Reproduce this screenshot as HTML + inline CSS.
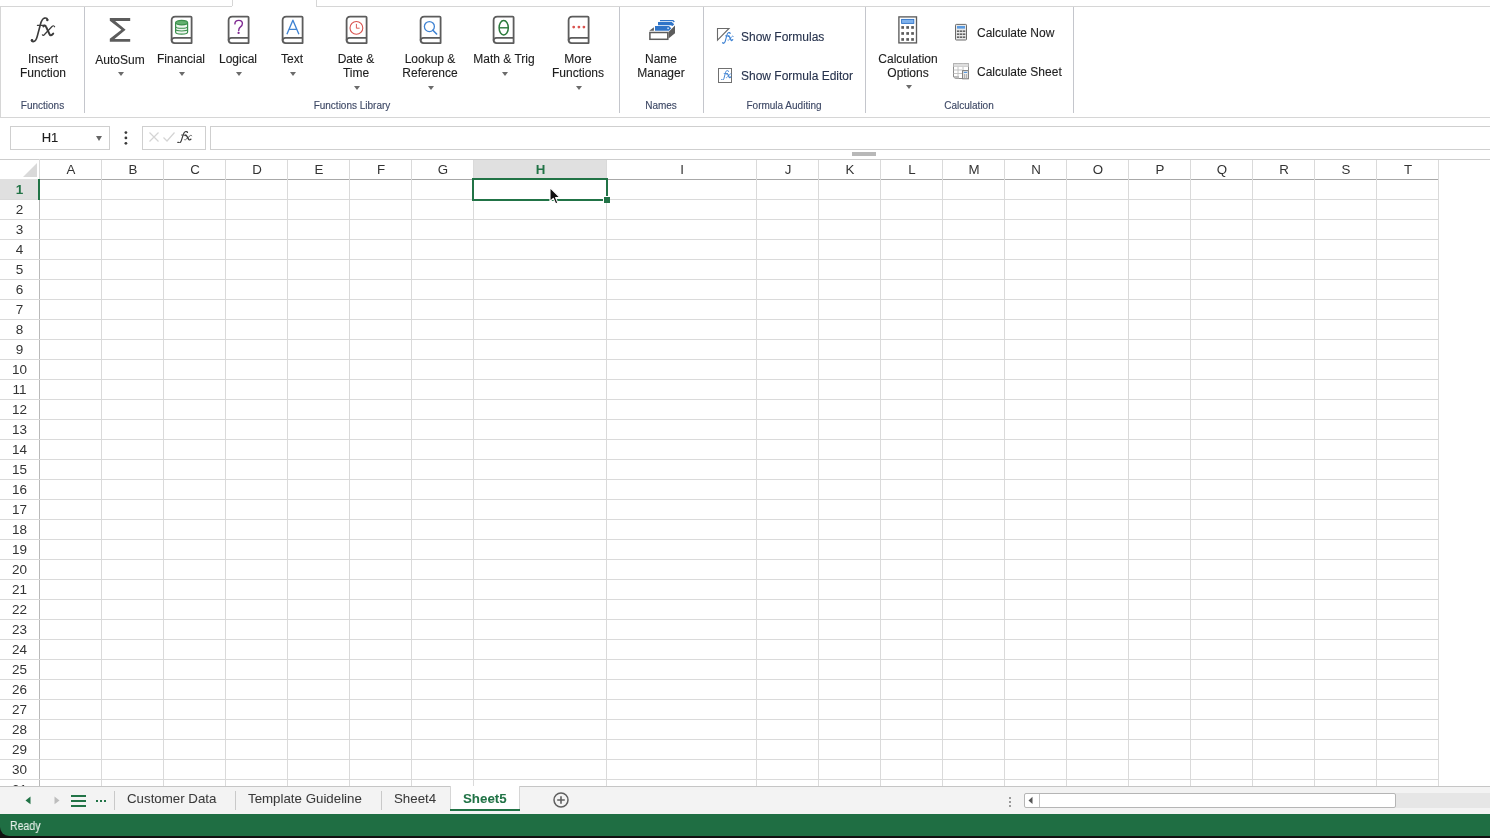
<!DOCTYPE html><html><head><meta charset="utf-8"><style>
*{box-sizing:border-box;margin:0;padding:0}
html,body{width:1490px;height:838px;overflow:hidden;background:#fff}
body{position:relative;font-family:"Liberation Sans",sans-serif;color:#222;-webkit-text-stroke:0.12px currentColor}
.abs{position:absolute}
.lbl,.grp,.ch,.rh,.t{will-change:transform}
.hl{position:absolute;height:1px}
.vl{position:absolute;width:1px}
.lbl{position:absolute;font-size:12px;line-height:14px;color:#1e1e1e;text-align:center;white-space:nowrap}
.grp{position:absolute;font-size:10px;line-height:12px;color:#3c4764;text-align:center;white-space:nowrap;top:100px}
.arr{position:absolute;width:0;height:0;border-left:3px solid transparent;border-right:3px solid transparent;border-top:4px solid #6b6b6b}
.ch{position:absolute;top:160px;height:20px;font-size:13.3px;line-height:20px;text-align:center;color:#333;-webkit-text-stroke:0}
.rh{position:absolute;left:0;width:39px;height:20px;font-size:13.5px;line-height:20px;text-align:center;color:#333;-webkit-text-stroke:0}
</style></head><body>
<div class="hl" style="left:0;top:6px;width:232px;background:#d6d6d6"></div>
<div class="hl" style="left:316px;top:6px;width:1174px;background:#d6d6d6"></div>
<div class="vl" style="left:232px;top:0;height:6px;background:#d6d6d6"></div>
<div class="vl" style="left:316px;top:0;height:6px;background:#d6d6d6"></div>
<div class="vl" style="left:0;top:6px;height:111px;background:#d6d6d6"></div>
<div class="hl" style="left:0;top:117px;width:1490px;background:#d6d6d6"></div>
<div class="vl" style="left:84px;top:7px;height:106px;background:#c4c6cc"></div>
<div class="vl" style="left:619px;top:7px;height:106px;background:#c4c6cc"></div>
<div class="vl" style="left:703px;top:7px;height:106px;background:#c4c6cc"></div>
<div class="vl" style="left:865px;top:7px;height:106px;background:#c4c6cc"></div>
<div class="vl" style="left:1073px;top:7px;height:106px;background:#c4c6cc"></div>
<div class="grp" style="left:0;width:85px">Functions</div>
<div class="grp" style="left:85px;width:534px">Functions Library</div>
<div class="grp" style="left:619px;width:84px">Names</div>
<div class="grp" style="left:703px;width:162px">Formula Auditing</div>
<div class="grp" style="left:865px;width:208px">Calculation</div>
<svg class="abs" style="left:30px;top:17px" width="26.0" height="26.0" viewBox="0 0 26 26" preserveAspectRatio="none"><g fill="none" stroke="#3b3b3b" stroke-linecap="round"><path d="M17.6,2.6 C17.2,1.2 15.8,0.8 14.6,1.1 C12.2,1.8 11.2,4.5 10.4,7.5 L7.2,19.5 C6.4,22.5 5.2,24.6 3.2,24.6 C2,24.6 1.4,23.8 1.6,23" stroke-width="1.6"/><path d="M7.4,8.3 H14.4" stroke-width="1.2"/><path d="M13.4,9.5 C14.2,8.3 15.4,8.2 16,9.6 L19.6,17.4 C20.2,18.8 21.4,18.8 23.2,16.6" stroke-width="2.0"/><path d="M24.6,9.8 C24,8.4 23,8.5 22,9.5 L14.5,17.5 C13.6,18.6 12.8,18.6 12.4,17.8" stroke-width="1.2"/></g><circle cx="17.3" cy="3" r="1.2" fill="#3b3b3b"/><circle cx="2.1" cy="23.2" r="1.2" fill="#3b3b3b"/></svg>
<svg class="abs" style="left:109px;top:18px" width="22" height="24" viewBox="0 0 22 24"><polygon points="0.8,0 21.2,0 21.2,2.9 6.1,2.9 16.6,11.85 5.5,21 21.2,21 21.2,23.7 0.8,23.7 0.8,20.8 12.4,11.85 0.8,2.7" fill="#5c5c5c"/></svg>
<svg class="abs" style="left:170.0px;top:15.3px" width="24" height="30" viewBox="0 0 24 30"><path d="M5.3,1.6 H20.6 Q21.6,1.6 21.6,2.6 V28.1 H4.6 Q1.6,28.1 1.6,25.1 V5.3 Q1.6,1.6 5.3,1.6 Z" fill="none" stroke="#5c5c5c" stroke-width="1.8" stroke-linejoin="round"/><path d="M1.6,25.6 Q1.6,22.9 4.6,22.9 H21.6" fill="none" stroke="#5c5c5c" stroke-width="1.8"/><path d="M5.6,7.7 V17 Q5.6,19.2 11.6,19.2 Q17.6,19.2 17.6,17 V7.7" fill="#eef6ef" stroke="#3a8f4c" stroke-width="1.2"/><ellipse cx="11.6" cy="7.6" rx="6" ry="2.3" fill="#64b070" stroke="#3a8f4c" stroke-width="1.2"/><path d="M5.6,11.4 Q5.6,13.2 11.6,13.2 Q17.6,13.2 17.6,11.4 M5.6,14.3 Q5.6,16 11.6,16 Q17.6,16 17.6,14.3" fill="none" stroke="#3a8f4c" stroke-width="1.1"/></svg>
<svg class="abs" style="left:227.2px;top:15.3px" width="24" height="30" viewBox="0 0 24 30"><path d="M5.3,1.6 H20.6 Q21.6,1.6 21.6,2.6 V28.1 H4.6 Q1.6,28.1 1.6,25.1 V5.3 Q1.6,1.6 5.3,1.6 Z" fill="none" stroke="#5c5c5c" stroke-width="1.8" stroke-linejoin="round"/><path d="M1.6,25.6 Q1.6,22.9 4.6,22.9 H21.6" fill="none" stroke="#5c5c5c" stroke-width="1.8"/><path d="M7.9,8.9 Q8,5.4 11.8,5.4 Q15.4,5.4 15.4,8.6 Q15.4,10.6 13.5,11.9 Q11.7,13.1 11.7,15.5" fill="none" stroke="#7f2a92" stroke-width="1.4" stroke-linecap="round"/><circle cx="11.6" cy="17.9" r="1.15" fill="#7f2a92"/></svg>
<svg class="abs" style="left:281.3px;top:15.3px" width="24" height="30" viewBox="0 0 24 30"><path d="M5.3,1.6 H20.6 Q21.6,1.6 21.6,2.6 V28.1 H4.6 Q1.6,28.1 1.6,25.1 V5.3 Q1.6,1.6 5.3,1.6 Z" fill="none" stroke="#5c5c5c" stroke-width="1.8" stroke-linejoin="round"/><path d="M1.6,25.6 Q1.6,22.9 4.6,22.9 H21.6" fill="none" stroke="#5c5c5c" stroke-width="1.8"/><path d="M5.9,19.3 L11.9,5.2 L17.9,19.3 M8,14.4 H15.8" fill="none" stroke="#3f83d3" stroke-width="1.35" stroke-linejoin="round"/></svg>
<svg class="abs" style="left:345.3px;top:15.3px" width="24" height="30" viewBox="0 0 24 30"><path d="M5.3,1.6 H20.6 Q21.6,1.6 21.6,2.6 V28.1 H4.6 Q1.6,28.1 1.6,25.1 V5.3 Q1.6,1.6 5.3,1.6 Z" fill="none" stroke="#5c5c5c" stroke-width="1.8" stroke-linejoin="round"/><path d="M1.6,25.6 Q1.6,22.9 4.6,22.9 H21.6" fill="none" stroke="#5c5c5c" stroke-width="1.8"/><circle cx="11.4" cy="12.9" r="6.4" fill="none" stroke="#d9534f" stroke-width="1.1"/><path d="M11.4,8.9 V13.2 H14.6" fill="none" stroke="#d9534f" stroke-width="0.95"/></svg>
<svg class="abs" style="left:419.0px;top:15.3px" width="24" height="30" viewBox="0 0 24 30"><path d="M5.3,1.6 H20.6 Q21.6,1.6 21.6,2.6 V28.1 H4.6 Q1.6,28.1 1.6,25.1 V5.3 Q1.6,1.6 5.3,1.6 Z" fill="none" stroke="#5c5c5c" stroke-width="1.8" stroke-linejoin="round"/><path d="M1.6,25.6 Q1.6,22.9 4.6,22.9 H21.6" fill="none" stroke="#5c5c5c" stroke-width="1.8"/><circle cx="10.4" cy="11.6" r="5" fill="none" stroke="#3f83d3" stroke-width="1.3"/><path d="M13.9,15.2 L17.6,19" fill="none" stroke="#3f83d3" stroke-width="1.6" stroke-linecap="round"/></svg>
<svg class="abs" style="left:492.3px;top:15.3px" width="24" height="30" viewBox="0 0 24 30"><path d="M5.3,1.6 H20.6 Q21.6,1.6 21.6,2.6 V28.1 H4.6 Q1.6,28.1 1.6,25.1 V5.3 Q1.6,1.6 5.3,1.6 Z" fill="none" stroke="#5c5c5c" stroke-width="1.8" stroke-linejoin="round"/><path d="M1.6,25.6 Q1.6,22.9 4.6,22.9 H21.6" fill="none" stroke="#5c5c5c" stroke-width="1.8"/><ellipse cx="11.7" cy="12.8" rx="4.6" ry="7.2" fill="none" stroke="#2b7a3b" stroke-width="1.5"/><path d="M7.2,12.8 H16.2" stroke="#2b7a3b" stroke-width="1.4"/></svg>
<svg class="abs" style="left:566.7px;top:15.3px" width="24" height="30" viewBox="0 0 24 30"><path d="M5.3,1.6 H20.6 Q21.6,1.6 21.6,2.6 V28.1 H4.6 Q1.6,28.1 1.6,25.1 V5.3 Q1.6,1.6 5.3,1.6 Z" fill="none" stroke="#5c5c5c" stroke-width="1.8" stroke-linejoin="round"/><path d="M1.6,25.6 Q1.6,22.9 4.6,22.9 H21.6" fill="none" stroke="#5c5c5c" stroke-width="1.8"/><circle cx="6.7" cy="12.1" r="1.4" fill="#d9534f"/><circle cx="11.9" cy="12.1" r="1.4" fill="#d9534f"/><circle cx="16.9" cy="12.1" r="1.4" fill="#d9534f"/></svg>
<svg class="abs" style="left:648px;top:19px" width="28" height="22" viewBox="0 0 28 22"><polygon points="12,0.9 25.2,0.9 26.8,2.5 25.7,3.6 24.9,2.3 12,2.3" fill="#2f74c8"/><polygon points="10,3.1 23.8,3.1 26.2,5.2 24.6,7 22.6,6.3 10,6.3" fill="#2f74c8"/><polygon points="7,7.1 21,7.1 23.3,9.3 21,11.7 7,11.7" fill="#2f74c8"/><rect x="19.3" y="8.5" width="1.6" height="1.6" fill="#cfe0f5"/><polygon points="1.3,11.7 5.9,8.2 5.9,11.7" fill="#5c5c5c"/><polygon points="20.5,13 27,6.6 27,14.3 20.5,19.6" fill="#5c5c5c"/><rect x="1.9" y="13.5" width="17.9" height="6.8" fill="#fff" stroke="#5c5c5c" stroke-width="1.5"/></svg>
<svg class="abs" style="left:716px;top:27px" width="20" height="19" viewBox="0 0 20 19"><path d="M1.5,1.5 H13 L1.5,13.2 Z" fill="none" stroke="#6a6a6a" stroke-width="1.1" stroke-linejoin="miter"/></svg>
<svg class="abs" style="left:722px;top:32.2px" width="12.0" height="12.0" viewBox="0 0 26 26" preserveAspectRatio="none"><g fill="none" stroke="#3f83d3" stroke-linecap="round"><path d="M17.6,2.6 C17.2,1.2 15.8,0.8 14.6,1.1 C12.2,1.8 11.2,4.5 10.4,7.5 L7.2,19.5 C6.4,22.5 5.2,24.6 3.2,24.6 C2,24.6 1.4,23.8 1.6,23" stroke-width="2.32"/><path d="M7.4,8.3 H14.4" stroke-width="1.74"/><path d="M13.4,9.5 C14.2,8.3 15.4,8.2 16,9.6 L19.6,17.4 C20.2,18.8 21.4,18.8 23.2,16.6" stroke-width="2.9"/><path d="M24.6,9.8 C24,8.4 23,8.5 22,9.5 L14.5,17.5 C13.6,18.6 12.8,18.6 12.4,17.8" stroke-width="1.74"/></g><circle cx="17.3" cy="3" r="1.2" fill="#3f83d3"/><circle cx="2.1" cy="23.2" r="1.2" fill="#3f83d3"/></svg>
<div class="abs" style="left:718px;top:67.5px;width:14px;height:15.5px;border:1.2px solid #707070"></div>
<svg class="abs" style="left:721.4px;top:69.6px" width="10.9" height="10.9" viewBox="0 0 26 26" preserveAspectRatio="none"><g fill="none" stroke="#3f83d3" stroke-linecap="round"><path d="M17.6,2.6 C17.2,1.2 15.8,0.8 14.6,1.1 C12.2,1.8 11.2,4.5 10.4,7.5 L7.2,19.5 C6.4,22.5 5.2,24.6 3.2,24.6 C2,24.6 1.4,23.8 1.6,23" stroke-width="2.32"/><path d="M7.4,8.3 H14.4" stroke-width="1.74"/><path d="M13.4,9.5 C14.2,8.3 15.4,8.2 16,9.6 L19.6,17.4 C20.2,18.8 21.4,18.8 23.2,16.6" stroke-width="2.9"/><path d="M24.6,9.8 C24,8.4 23,8.5 22,9.5 L14.5,17.5 C13.6,18.6 12.8,18.6 12.4,17.8" stroke-width="1.74"/></g><circle cx="17.3" cy="3" r="1.2" fill="#3f83d3"/><circle cx="2.1" cy="23.2" r="1.2" fill="#3f83d3"/></svg>
<svg class="abs" style="left:897px;top:15px" width="21" height="30" viewBox="0 0 21 30"><rect x="1.9" y="1.9" width="17.6" height="26" fill="#fff" stroke="#5c5c5c" stroke-width="1.35"/><rect x="4.6" y="4.4" width="12.2" height="4" fill="#7fb2ec" stroke="#2f74c8" stroke-width="0.9"/><rect x="4.3" y="11.1" width="2.7" height="2.7" fill="#5c5c5c"/><rect x="9.3" y="11.1" width="2.7" height="2.7" fill="#5c5c5c"/><rect x="14.2" y="11.1" width="2.7" height="2.7" fill="#5c5c5c"/><rect x="4.3" y="17.1" width="2.7" height="2.7" fill="#5c5c5c"/><rect x="9.3" y="17.1" width="2.7" height="2.7" fill="#5c5c5c"/><rect x="14.2" y="17.1" width="2.7" height="2.7" fill="#5c5c5c"/><rect x="4.3" y="23.1" width="2.7" height="2.7" fill="#5c5c5c"/><rect x="9.3" y="23.1" width="2.7" height="2.7" fill="#5c5c5c"/><rect x="14.2" y="23.1" width="2.7" height="2.7" fill="#5c5c5c"/></svg>
<svg class="abs" style="left:954px;top:23px" width="14" height="19" viewBox="0 0 14 19"><rect x="1.5" y="1.4" width="11" height="15.6" rx="0.8" fill="#e9e9e9" stroke="#6a6a6a" stroke-width="1"/><rect x="3" y="3" width="8" height="2.6" fill="#5b9be0"/><rect x="2.9000000000000004" y="7.5" width="2.4" height="1.3" fill="#444"/><rect x="5.9" y="7.5" width="2.4" height="1.3" fill="#444"/><rect x="8.899999999999999" y="7.5" width="2.4" height="1.3" fill="#444"/><rect x="2.9000000000000004" y="10.5" width="2.4" height="1.3" fill="#444"/><rect x="5.9" y="10.5" width="2.4" height="1.3" fill="#444"/><rect x="8.899999999999999" y="10.5" width="2.4" height="1.3" fill="#444"/><rect x="2.9000000000000004" y="13.5" width="2.4" height="1.3" fill="#444"/><rect x="5.9" y="13.5" width="2.4" height="1.3" fill="#444"/><rect x="8.899999999999999" y="13.5" width="2.4" height="1.3" fill="#444"/></svg>
<svg class="abs" style="left:952px;top:62px" width="18" height="18" viewBox="0 0 18 18"><path d="M1.5,1.5 H16.5 V8 M1.5,1.5 V15 L3.5,16.5 H10" fill="#fff" stroke="#8a8a8a" stroke-width="1"/><path d="M1.5,4.5 H16.5 M1.5,8 H10 M1.5,11.5 H10 M6,1.5 V15 M11,1.5 V8" stroke="#bdbdbd" stroke-width="0.9" fill="none"/><rect x="1.5" y="1.5" width="15" height="3" fill="#dedede"/><path d="M1.5,14 H7 V16.5 H3.5 Z" fill="#bdbdbd"/><rect x="10.6" y="8.6" width="5.8" height="8.2" fill="#f0f0f0" stroke="#777" stroke-width="1"/><rect x="11.8" y="9.8" width="3.4" height="1.2" fill="#5b9be0"/><path d="M12.6,12 V16 M14.4,12 V16" stroke="#999" stroke-width="0.8"/></svg>
<div class="lbl" style="left:-7.0px;top:52px;width:100px">Insert<br>Function</div>
<div class="lbl" style="left:70.0px;top:53px;width:100px">AutoSum</div>
<div class="arr" style="left:118px;top:72px"></div>
<div class="lbl" style="left:131.0px;top:52px;width:100px">Financial</div>
<div class="arr" style="left:179px;top:72px"></div>
<div class="lbl" style="left:188.0px;top:52px;width:100px">Logical</div>
<div class="arr" style="left:236px;top:72px"></div>
<div class="lbl" style="left:242.0px;top:52px;width:100px">Text</div>
<div class="arr" style="left:290px;top:72px"></div>
<div class="lbl" style="left:306.0px;top:52px;width:100px">Date &amp;<br>Time</div>
<div class="arr" style="left:354px;top:86px"></div>
<div class="lbl" style="left:380.0px;top:52px;width:100px">Lookup &amp;<br>Reference</div>
<div class="arr" style="left:428px;top:86px"></div>
<div class="lbl" style="left:454.0px;top:52px;width:100px">Math &amp; Trig</div>
<div class="arr" style="left:502px;top:72px"></div>
<div class="lbl" style="left:528.0px;top:52px;width:100px">More<br>Functions</div>
<div class="arr" style="left:576px;top:86px"></div>
<div class="lbl" style="left:611.0px;top:52px;width:100px">Name<br>Manager</div>
<div class="lbl" style="left:858.0px;top:52px;width:100px">Calculation<br>Options</div>
<div class="arr" style="left:906px;top:85px"></div>
<div class="lbl" style="left:741px;top:30px;text-align:left;color:#27334d">Show Formulas</div>
<div class="lbl" style="left:741px;top:69px;text-align:left;color:#27334d">Show Formula Editor</div>
<div class="lbl" style="left:977px;top:26px;text-align:left">Calculate Now</div>
<div class="lbl" style="left:977px;top:65px;text-align:left">Calculate Sheet</div>
<div class="abs" style="left:10px;top:126px;width:100px;height:24px;border:1px solid #cfcfcf;background:#fff"></div>
<div class="abs t" style="left:10px;top:126px;width:80px;height:24px;font-size:13px;line-height:24px;text-align:center;color:#1e1e1e">H1</div>
<div class="abs" style="left:95.8px;top:135.8px;width:0;height:0;border-left:3.6px solid transparent;border-right:3.6px solid transparent;border-top:5.2px solid #666"></div>
<svg class="abs" style="left:120px;top:128px" width="12" height="20"><circle cx="5.9" cy="4.6" r="1.4" fill="#3a3a3a"/><circle cx="5.9" cy="9.9" r="1.4" fill="#3a3a3a"/><circle cx="5.9" cy="15.3" r="1.4" fill="#3a3a3a"/></svg>
<div class="abs" style="left:142px;top:126px;width:64px;height:24px;border:1px solid #cfcfcf;background:#fff"></div>
<div class="abs" style="left:210px;top:126px;width:1290px;height:24px;border:1px solid #cfcfcf;background:#fff"></div>
<svg class="abs" style="left:148px;top:131px" width="12" height="12" viewBox="0 0 12 12"><path d="M1.5,1.5 L10.5,10.5 M10.5,1.5 L1.5,10.5" stroke="#d4d4d4" stroke-width="1.2"/></svg>
<svg class="abs" style="left:162px;top:131px" width="14" height="12" viewBox="0 0 14 12"><path d="M1.5,6.5 L5,10 L12.5,1.5" fill="none" stroke="#d4d4d4" stroke-width="1.2"/></svg>
<svg class="abs" style="left:177.3px;top:130.8px" width="15.6" height="12.7" viewBox="0 0 26 26" preserveAspectRatio="none"><g fill="none" stroke="#3b3b3b" stroke-linecap="round"><path d="M17.6,2.6 C17.2,1.2 15.8,0.8 14.6,1.1 C12.2,1.8 11.2,4.5 10.4,7.5 L7.2,19.5 C6.4,22.5 5.2,24.6 3.2,24.6 C2,24.6 1.4,23.8 1.6,23" stroke-width="1.92"/><path d="M7.4,8.3 H14.4" stroke-width="1.44"/><path d="M13.4,9.5 C14.2,8.3 15.4,8.2 16,9.6 L19.6,17.4 C20.2,18.8 21.4,18.8 23.2,16.6" stroke-width="2.4"/><path d="M24.6,9.8 C24,8.4 23,8.5 22,9.5 L14.5,17.5 C13.6,18.6 12.8,18.6 12.4,17.8" stroke-width="1.44"/></g><circle cx="17.3" cy="3" r="1.2" fill="#3b3b3b"/><circle cx="2.1" cy="23.2" r="1.2" fill="#3b3b3b"/></svg>
<div class="abs" style="left:852px;top:152px;width:24px;height:4px;background:#b8b8b8"></div>
<div class="hl" style="left:0;top:159px;width:1490px;background:#cdcdcd"></div>
<div class="hl" style="left:39px;top:179px;width:1400px;background:#a8a8a8"></div>
<div class="abs" style="left:474px;top:160px;width:132px;height:19px;background:#e0e0e0"></div>
<div class="abs" style="left:0;top:179px;width:38px;height:20px;background:#e0e0e0"></div>
<svg class="abs" style="left:22px;top:162px" width="16" height="16"><polygon points="15,1 15,15 1,15" fill="#d9d9d9"/></svg>
<div class="vl" style="left:39px;top:159px;height:20px;background:#dadada"></div>
<div class="vl" style="left:39px;top:179px;height:607px;background:#b9b9b9"></div>
<div class="vl" style="left:101px;top:160px;height:626px;background:#dadada"></div>
<div class="vl" style="left:163px;top:160px;height:626px;background:#dadada"></div>
<div class="vl" style="left:225px;top:160px;height:626px;background:#dadada"></div>
<div class="vl" style="left:287px;top:160px;height:626px;background:#dadada"></div>
<div class="vl" style="left:349px;top:160px;height:626px;background:#dadada"></div>
<div class="vl" style="left:411px;top:160px;height:626px;background:#dadada"></div>
<div class="vl" style="left:473px;top:160px;height:626px;background:#dadada"></div>
<div class="vl" style="left:606px;top:160px;height:626px;background:#dadada"></div>
<div class="vl" style="left:756px;top:160px;height:626px;background:#dadada"></div>
<div class="vl" style="left:818px;top:160px;height:626px;background:#dadada"></div>
<div class="vl" style="left:880px;top:160px;height:626px;background:#dadada"></div>
<div class="vl" style="left:942px;top:160px;height:626px;background:#dadada"></div>
<div class="vl" style="left:1004px;top:160px;height:626px;background:#dadada"></div>
<div class="vl" style="left:1066px;top:160px;height:626px;background:#dadada"></div>
<div class="vl" style="left:1128px;top:160px;height:626px;background:#dadada"></div>
<div class="vl" style="left:1190px;top:160px;height:626px;background:#dadada"></div>
<div class="vl" style="left:1252px;top:160px;height:626px;background:#dadada"></div>
<div class="vl" style="left:1314px;top:160px;height:626px;background:#dadada"></div>
<div class="vl" style="left:1376px;top:160px;height:626px;background:#dadada"></div>
<div class="vl" style="left:1438px;top:160px;height:626px;background:#dadada"></div>
<div class="hl" style="left:0;top:199px;width:1439px;background:#dadada"></div>
<div class="hl" style="left:0;top:219px;width:1439px;background:#dadada"></div>
<div class="hl" style="left:0;top:239px;width:1439px;background:#dadada"></div>
<div class="hl" style="left:0;top:259px;width:1439px;background:#dadada"></div>
<div class="hl" style="left:0;top:279px;width:1439px;background:#dadada"></div>
<div class="hl" style="left:0;top:299px;width:1439px;background:#dadada"></div>
<div class="hl" style="left:0;top:319px;width:1439px;background:#dadada"></div>
<div class="hl" style="left:0;top:339px;width:1439px;background:#dadada"></div>
<div class="hl" style="left:0;top:359px;width:1439px;background:#dadada"></div>
<div class="hl" style="left:0;top:379px;width:1439px;background:#dadada"></div>
<div class="hl" style="left:0;top:399px;width:1439px;background:#dadada"></div>
<div class="hl" style="left:0;top:419px;width:1439px;background:#dadada"></div>
<div class="hl" style="left:0;top:439px;width:1439px;background:#dadada"></div>
<div class="hl" style="left:0;top:459px;width:1439px;background:#dadada"></div>
<div class="hl" style="left:0;top:479px;width:1439px;background:#dadada"></div>
<div class="hl" style="left:0;top:499px;width:1439px;background:#dadada"></div>
<div class="hl" style="left:0;top:519px;width:1439px;background:#dadada"></div>
<div class="hl" style="left:0;top:539px;width:1439px;background:#dadada"></div>
<div class="hl" style="left:0;top:559px;width:1439px;background:#dadada"></div>
<div class="hl" style="left:0;top:579px;width:1439px;background:#dadada"></div>
<div class="hl" style="left:0;top:599px;width:1439px;background:#dadada"></div>
<div class="hl" style="left:0;top:619px;width:1439px;background:#dadada"></div>
<div class="hl" style="left:0;top:639px;width:1439px;background:#dadada"></div>
<div class="hl" style="left:0;top:659px;width:1439px;background:#dadada"></div>
<div class="hl" style="left:0;top:679px;width:1439px;background:#dadada"></div>
<div class="hl" style="left:0;top:699px;width:1439px;background:#dadada"></div>
<div class="hl" style="left:0;top:719px;width:1439px;background:#dadada"></div>
<div class="hl" style="left:0;top:739px;width:1439px;background:#dadada"></div>
<div class="hl" style="left:0;top:759px;width:1439px;background:#dadada"></div>
<div class="hl" style="left:0;top:779px;width:1439px;background:#dadada"></div>
<div class="ch" style="left:40px;width:62px">A</div>
<div class="ch" style="left:102px;width:62px">B</div>
<div class="ch" style="left:164px;width:62px">C</div>
<div class="ch" style="left:226px;width:62px">D</div>
<div class="ch" style="left:288px;width:62px">E</div>
<div class="ch" style="left:350px;width:62px">F</div>
<div class="ch" style="left:412px;width:62px">G</div>
<div class="ch" style="left:474px;width:133px;color:#217346;font-weight:bold">H</div>
<div class="ch" style="left:607px;width:150px">I</div>
<div class="ch" style="left:757px;width:62px">J</div>
<div class="ch" style="left:819px;width:62px">K</div>
<div class="ch" style="left:881px;width:62px">L</div>
<div class="ch" style="left:943px;width:62px">M</div>
<div class="ch" style="left:1005px;width:62px">N</div>
<div class="ch" style="left:1067px;width:62px">O</div>
<div class="ch" style="left:1129px;width:62px">P</div>
<div class="ch" style="left:1191px;width:62px">Q</div>
<div class="ch" style="left:1253px;width:62px">R</div>
<div class="ch" style="left:1315px;width:62px">S</div>
<div class="ch" style="left:1377px;width:62px">T</div>
<div class="rh" style="top:180px;color:#217346;font-weight:bold">1</div>
<div class="rh" style="top:200px">2</div>
<div class="rh" style="top:220px">3</div>
<div class="rh" style="top:240px">4</div>
<div class="rh" style="top:260px">5</div>
<div class="rh" style="top:280px">6</div>
<div class="rh" style="top:300px">7</div>
<div class="rh" style="top:320px">8</div>
<div class="rh" style="top:340px">9</div>
<div class="rh" style="top:360px">10</div>
<div class="rh" style="top:380px">11</div>
<div class="rh" style="top:400px">12</div>
<div class="rh" style="top:420px">13</div>
<div class="rh" style="top:440px">14</div>
<div class="rh" style="top:460px">15</div>
<div class="rh" style="top:480px">16</div>
<div class="rh" style="top:500px">17</div>
<div class="rh" style="top:520px">18</div>
<div class="rh" style="top:540px">19</div>
<div class="rh" style="top:560px">20</div>
<div class="rh" style="top:580px">21</div>
<div class="rh" style="top:600px">22</div>
<div class="rh" style="top:620px">23</div>
<div class="rh" style="top:640px">24</div>
<div class="rh" style="top:660px">25</div>
<div class="rh" style="top:680px">26</div>
<div class="rh" style="top:700px">27</div>
<div class="rh" style="top:720px">28</div>
<div class="rh" style="top:740px">29</div>
<div class="rh" style="top:760px">30</div>
<div class="rh" style="top:780px">31</div>
<div class="abs" style="left:38px;top:179px;width:2px;height:21px;background:#217346"></div>
<div class="abs" style="left:472px;top:178px;width:136px;height:23px;border:2px solid #217346"></div>
<div class="abs" style="left:602.5px;top:195.5px;width:7px;height:7px;background:#fff"></div><div class="abs" style="left:603.5px;top:196.5px;width:6px;height:6px;background:#217346"></div>
<svg class="abs" style="left:548px;top:186px" width="14" height="20" viewBox="0 0 14 20"><path d="M2,1.5 L2,15.5 L5.3,12.4 L7.6,17.8 L9.8,16.9 L7.6,11.6 L12,11.6 Z" fill="#111" stroke="#fff" stroke-width="1.1" stroke-linejoin="round"/></svg>
<div class="abs" style="left:0;top:786px;width:1490px;height:28px;background:#f3f3f3;border-top:1px solid #c6c6c6"></div>
<svg class="abs" style="left:24px;top:796px" width="8" height="9" viewBox="0 0 8 9"><polygon points="6.5,0.5 6.5,8.3 1.5,4.4" fill="#217346"/></svg>
<svg class="abs" style="left:53px;top:796px" width="8" height="9" viewBox="0 0 8 9"><polygon points="1.5,0.5 1.5,8.3 6.5,4.4" fill="#bdbdbd"/></svg>
<div class="abs" style="left:71px;top:795px;width:15px;height:2px;background:#217346"></div>
<div class="abs" style="left:71px;top:800px;width:15px;height:2px;background:#217346"></div>
<div class="abs" style="left:71px;top:805px;width:15px;height:2px;background:#217346"></div>
<div class="abs" style="left:96px;top:800px;width:2px;height:2px;background:#217346"></div>
<div class="abs" style="left:100px;top:800px;width:2px;height:2px;background:#217346"></div>
<div class="abs" style="left:104px;top:800px;width:2px;height:2px;background:#217346"></div>
<div class="abs" style="left:114px;top:791px;width:1px;height:19px;background:#c9c9c9"></div>
<div class="abs" style="left:235px;top:791px;width:1px;height:19px;background:#c9c9c9"></div>
<div class="abs" style="left:381px;top:791px;width:1px;height:19px;background:#c9c9c9"></div>
<div class="t" style="position:absolute;top:789px;font-size:13.3px;line-height:20px;color:#3a3a3a;white-space:nowrap;-webkit-text-stroke:0.05px currentColor;left:127px">Customer Data</div>
<div class="t" style="position:absolute;top:789px;font-size:13.3px;line-height:20px;color:#3a3a3a;white-space:nowrap;-webkit-text-stroke:0.05px currentColor;left:248px">Template Guideline</div>
<div class="t" style="position:absolute;top:789px;font-size:13.3px;line-height:20px;color:#3a3a3a;white-space:nowrap;-webkit-text-stroke:0.05px currentColor;left:394px">Sheet4</div>
<div class="abs" style="left:450px;top:786px;width:70px;height:24px;background:#fff;border-left:1px solid #d6d6d6;border-right:1px solid #d6d6d6"></div>
<div class="abs" style="left:450px;top:809px;width:70px;height:2px;background:#217346"></div>
<div class="t" style="position:absolute;top:789px;font-size:13.3px;line-height:20px;color:#3a3a3a;white-space:nowrap;-webkit-text-stroke:0.05px currentColor;left:463px;color:#217346;font-weight:bold">Sheet5</div>
<svg class="abs" style="left:552px;top:791px" width="18" height="18" viewBox="0 0 18 18"><circle cx="9" cy="9" r="7" fill="none" stroke="#5f5f5f" stroke-width="1.5"/><path d="M9,5.2 V12.8 M5.2,9 H12.8" stroke="#5f5f5f" stroke-width="1.6"/></svg>
<div class="abs" style="left:1009px;top:797px;width:2px;height:2px;background:#9a9a9a"></div>
<div class="abs" style="left:1009px;top:801px;width:2px;height:2px;background:#9a9a9a"></div>
<div class="abs" style="left:1009px;top:805px;width:2px;height:2px;background:#9a9a9a"></div>
<div class="abs" style="left:1395px;top:793px;width:95px;height:15px;background:#e6e6e6"></div>
<div class="abs" style="left:1024px;top:793px;width:372px;height:15px;background:#fff;border:1px solid #b5b5b5;border-radius:2px"></div>
<div class="abs" style="left:1039px;top:794px;width:1px;height:13px;background:#c5c5c5"></div>
<svg class="abs" style="left:1027px;top:796px" width="8" height="9" viewBox="0 0 8 9"><polygon points="5.5,0.8 5.5,8 1.5,4.4" fill="#555"/></svg>
<div class="abs" style="left:0;top:814px;width:1490px;height:24px;background:#111"></div>
<div class="abs" style="left:0;top:814px;width:1490px;height:22px;background:#1f6e43;border-bottom-left-radius:9px"></div>
<div class="abs t" style="left:9.5px;top:818px;font-size:12px;line-height:16px;transform:scaleX(0.88);transform-origin:0 0;color:#e6efe9">Ready</div>
</body></html>
